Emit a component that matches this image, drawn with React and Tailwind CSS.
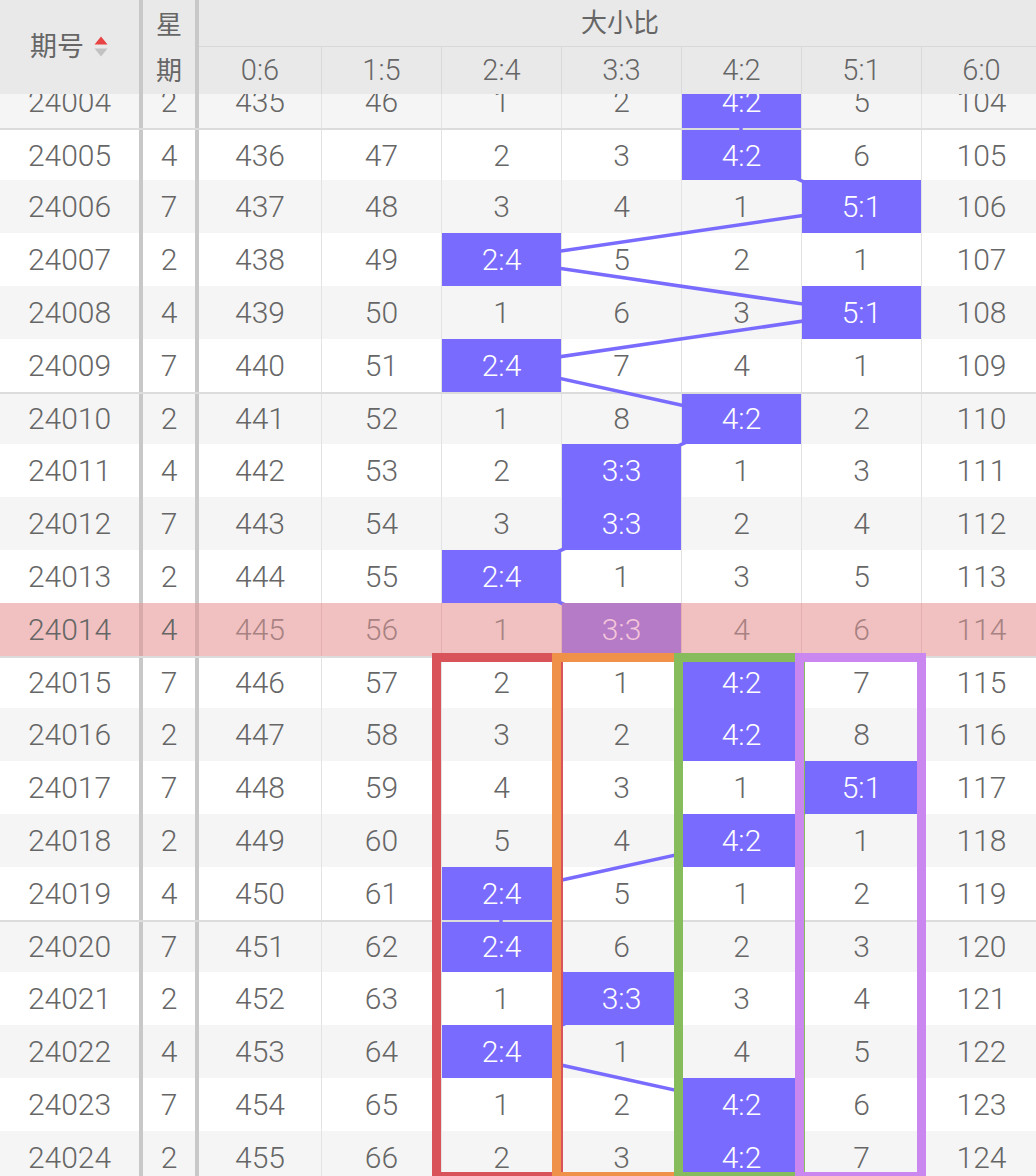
import React from 'react';

const LABELS = ['0:6', '1:5', '2:4', '3:3', '4:2', '5:1', '6:0'];
const ROW_H = 52.8;

// [期号, 星期, 7 values, highlighted column]
const rows = [
  ['24004', '2', ['435', '46', '1', '2', '', '5', '104'], 4],
  ['24005', '4', ['436', '47', '2', '3', '', '6', '105'], 4],
  ['24006', '7', ['437', '48', '3', '4', '1', '', '106'], 5],
  ['24007', '2', ['438', '49', '', '5', '2', '1', '107'], 2],
  ['24008', '4', ['439', '50', '1', '6', '3', '', '108'], 5],
  ['24009', '7', ['440', '51', '', '7', '4', '1', '109'], 2],
  ['24010', '2', ['441', '52', '1', '8', '', '2', '110'], 4],
  ['24011', '4', ['442', '53', '2', '', '1', '3', '111'], 3],
  ['24012', '7', ['443', '54', '3', '', '2', '4', '112'], 3],
  ['24013', '2', ['444', '55', '', '1', '3', '5', '113'], 2],
  ['24014', '4', ['445', '56', '1', '', '4', '6', '114'], 3],
  ['24015', '7', ['446', '57', '2', '1', '', '7', '115'], 4],
  ['24016', '2', ['447', '58', '3', '2', '', '8', '116'], 4],
  ['24017', '7', ['448', '59', '4', '3', '1', '', '117'], 5],
  ['24018', '2', ['449', '60', '5', '4', '', '1', '118'], 4],
  ['24019', '4', ['450', '61', '', '5', '1', '2', '119'], 2],
  ['24020', '7', ['451', '62', '', '6', '2', '3', '120'], 2],
  ['24021', '2', ['452', '63', '1', '', '3', '4', '121'], 3],
  ['24022', '4', ['453', '64', '', '1', '4', '5', '122'], 2],
  ['24023', '7', ['454', '65', '1', '2', '', '6', '123'], 4],
  ['24024', '2', ['455', '66', '2', '3', '', '7', '124'], 4],
];

const PINK = 10;
const groupStarts = [1, 6, 11, 16];

const colCenter = (j) => (j === 0 ? 260 : 321 + (j - 1) * 120 + 60);

const boxes = [
  'left-[432px] border-[#d9545a]',
  'left-[552px] border-[#ef9148]',
  'left-[674px] border-[#86bc5b]',
  'left-[795px] border-[#cb87f0]',
];

const SortIcon = () => (
  <svg width="16" height="24" viewBox="0 0 16 24">
    <path d="M8 1.5 L14.5 9.5 L1.5 9.5 Z" fill="#e84343" />
    <path d="M1.5 13.5 L14.5 13.5 L8 21.5 Z" fill="#c2c2c2" />
  </svg>
);

const Row = ({ row, idx }) => {
  const [id, week, vals, hi] = row;
  const pink = idx === PINK;
  const bg = pink ? 'bg-[#f1c1c1]' : idx % 2 === 0 ? 'bg-[#f5f5f5]' : 'bg-white';
  const divider = pink ? 'border-[#d8aaaa]' : 'border-[#c8c8c8]';
  const sep = pink ? 'border-[#e6b0b0]' : 'border-[#e3e3e3]';
  const group = groupStarts.includes(idx) ? 'border-t-2 border-[#dcdcdc]' : '';

  return (
    <div className={`flex h-[52.8px] ${bg} ${group}`}>
      <div className={`w-[143px] shrink-0 border-r-4 ${divider} flex items-center justify-center`}>{id}</div>
      <div className={`w-[56px] shrink-0 border-r-4 ${divider} flex items-center justify-center`}>{week}</div>
      {vals.map((v, j) => (
        <div
          key={j}
          className={`${j === 0 ? 'w-[122px]' : `w-[120px] border-l ${sep}`} shrink-0 h-full`}
        >
          {j === hi ? (
            <div
              className={`relative z-20 h-full flex items-center justify-center ${
                pink ? 'bg-[#b57bc6] text-[#f4c6da]' : 'bg-[#7a6bff] text-white'
              }`}
            >
              {LABELS[j]}
            </div>
          ) : (
            <div className={`h-full flex items-center justify-center ${pink ? 'text-[#a88282]' : ''}`}>{v}</div>
          )}
        </div>
      ))}
    </div>
  );
};

export default function App() {
  const lines = rows.slice(1).map((r, i) => ({
    x1: colCenter(rows[i][3]),
    y1: i * ROW_H + ROW_H / 2,
    x2: colCenter(r[3]),
    y2: (i + 1) * ROW_H + ROW_H / 2,
  }));

  return (
    <div className="w-[1036px] h-[1176px] overflow-hidden bg-white text-[#666] font-light font-['Roboto','Noto_Sans_CJK_SC',sans-serif]">
      {/* Header */}
      <div className="flex h-[94px] bg-[#e9e9e9]">
        <div className="w-[143px] shrink-0 border-r-4 border-[#c8c8c8] flex items-center justify-center gap-[9px] text-[27px] font-normal">
          <span>期号</span>
          <SortIcon />
        </div>
        <div className="w-[56px] shrink-0 border-r-4 border-[#c8c8c8] flex items-center justify-center pt-[2px]">
          <div className="text-[26px] font-normal leading-[46px] text-center">
            星
            <br />
            期
          </div>
        </div>
        <div className="w-[842px] shrink-0 flex flex-col">
          <div className="h-[47px] border-b border-[#d8d8d8] flex items-center justify-center text-[26px] font-normal">大小比</div>
          <div className="flex flex-1">
            {LABELS.map((l, j) => (
              <div
                key={l}
                className={`${j === 0 ? 'w-[122px]' : 'w-[120px] border-l border-[#dadada]'} shrink-0 flex items-center justify-center text-[29px]`}
              >
                {l}
              </div>
            ))}
          </div>
        </div>
      </div>

      {/* Body, scrolled a little under the header */}
      <div className="h-[1082px] overflow-hidden">
        <div className="relative -mt-[19.2px] text-[30px]">
          {rows.map((r, i) => (
            <Row key={r[0]} row={r} idx={i} />
          ))}

          <svg className="absolute left-0 top-0 z-10 pointer-events-none" width="1041" height="1109">
            {lines.map((l, i) => (
              <line key={i} {...l} stroke="#7a6bff" strokeWidth="3.5" />
            ))}
          </svg>

          {boxes.map((b) => (
            <div key={b} className={`absolute z-30 top-[577.8px] h-[528px] w-[131px] border-[9px] pointer-events-none ${b}`} />
          ))}
        </div>
      </div>
    </div>
  );
}
